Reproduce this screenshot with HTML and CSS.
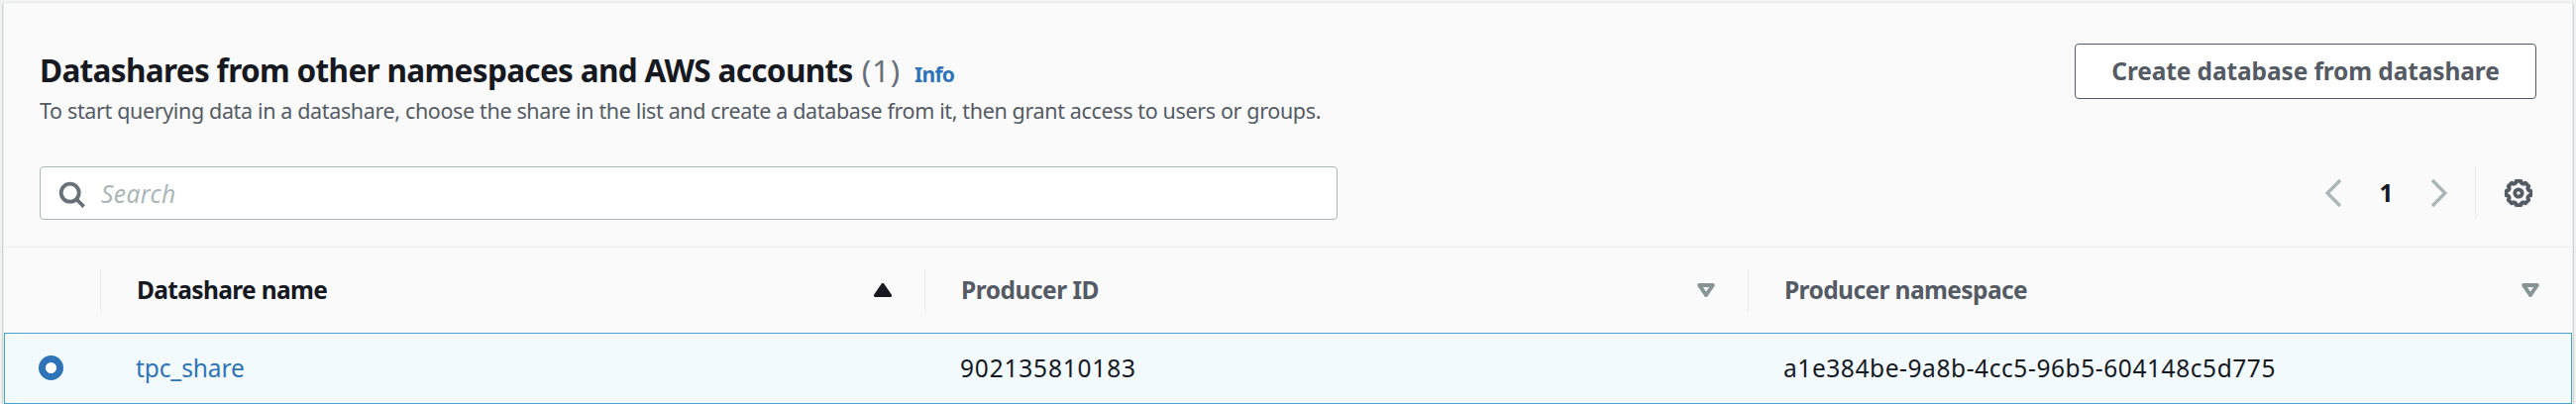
FILE: index.html
```
<!DOCTYPE html>
<html lang="en">
<head>
<meta charset="utf-8">
<title>Datashares</title>
<link rel="stylesheet" href="styles.css">
</head>
<body>
<main class="panel">
  <header class="header">
    <div>
      <h2 class="title"><span class="title-text">Datashares from other namespaces and AWS accounts</span><span class="count">(1)</span><a class="info">Info</a></h2>
      <p class="description">To start querying data in a datashare, choose the share in the list and create a database from it, then grant access to users or groups.</p>
    </div>
    <button class="button">Create database from datashare</button>
  </header>
  <div class="tools">
    <div class="search">
      <svg class="search-icon" width="28" height="28" viewBox="0 0 28 28" fill="none" stroke="#687078" stroke-width="3.8"><circle cx="11.7" cy="11.7" r="9"/><path d="M18 18l7.6 7.6"/></svg>
      <span class="placeholder">Search</span>
    </div>
    <div class="pager">
      <svg width="18" height="30" viewBox="0 0 18 30" fill="none" stroke="#aab7b8" stroke-width="3.4"><path d="M16 2L3.2 15 16 28"/></svg>
      <span class="page">1</span>
      <svg width="18" height="30" viewBox="0 0 18 30" fill="none" stroke="#aab7b8" stroke-width="3.4"><path d="M2 2l12.8 13L2 28"/></svg>
      <span class="divider"></span>
      <svg width="30" height="30" viewBox="-15 -15 30 30" fill="none" stroke="#545b64" stroke-width="3.8" stroke-linejoin="round"><path d="M12.2-2.4V2.4L10 3 9.2 4.9 10.3 6.9 6.9 10.3 4.9 9.2 3 10 2.4 12.2H-2.4L-3 10-4.9 9.2-6.9 10.3-10.3 6.9-9.2 4.9-10 3-12.2 2.4V-2.4L-10-3-9.2-4.9-10.3-6.9-6.9-10.3-4.9-9.2-3-10-2.4-12.2H2.4L3-10 4.9-9.2 6.9-10.3 10.3-6.9 9.2-4.9 10-3Z"/><circle r="3.7"/></svg>
    </div>
  </div>
  <div class="grid head">
    <div class="cell"></div>
    <div class="cell sorted"><span class="name-label">Datashare name</span><svg width="20" height="16" viewBox="0 0 20 16" fill="#16191f" stroke="#16191f" stroke-width="3" stroke-linejoin="round"><path d="M10 2.3L2.4 13.4H17.6Z"/></svg></div>
    <div class="cell"><span class="id-label">Producer ID</span><svg width="20" height="16" viewBox="0 0 20 16" fill="none" stroke="#879596" stroke-width="4" stroke-linejoin="round"><path d="M3.2 3H16.8L10 13Z"/></svg></div>
    <div class="cell"><span class="ns-label">Producer namespace</span><svg width="20" height="16" viewBox="0 0 20 16" fill="none" stroke="#879596" stroke-width="4" stroke-linejoin="round"><path d="M3.2 3H16.8L10 13Z"/></svg></div>
  </div>
  <div class="grid row">
    <div class="select"><span class="radio"></span></div>
    <a class="value link">tpc_share</a>
    <div class="value account">902135810183</div>
    <div class="value namespace">a1e384be-9a8b-4cc5-96b5-604148c5d775</div>
  </div>
</main>
</body>
</html>
```
FILE: styles.css
```
* { box-sizing: border-box; }
body {
  margin: 0;
  height: 408px;
  padding: 3px 4px 0;
  overflow: hidden;
  background: #f1f3f3;
  font-family: "Noto Sans", "Open Sans", sans-serif;
  font-size: 24.5px;
  color: #16191f;
}
.panel {
  height: 420px;
  background: #fafafa;
  box-shadow: 0 0 0 1px #e6eaea, 1px 1px 2px 0 rgba(0, 28, 36, .4), -1px 1px 2px 0 rgba(0, 28, 36, .4);
}
.header {
  display: flex;
  justify-content: space-between;
  align-items: flex-start;
  height: 165px;
  padding: 41px 36px 0;
}
.title {
  display: flex;
  align-items: baseline;
  height: 42px;
  margin: 6px 0 5px;
  font-size: 31.5px;
  line-height: 42px;
  white-space: nowrap;
}
.title-text { letter-spacing: -.66px; }
.count { margin-left: 9px; font-weight: 400; letter-spacing: .8px; color: #687078; }
.info { margin-left: 14px; font-size: 21px; letter-spacing: -.7px; color: #2e73b8; }
.description {
  margin: 0;
  font-size: 21.5px;
  line-height: 30px;
  letter-spacing: -.36px;
  color: #545b64;
  white-space: nowrap;
}
.button {
  width: 466px;
  height: 56px;
  padding: 0 0 2px;
  border: 1px solid #545b64;
  border-radius: 4px;
  background: #fff;
  font: 700 24.5px "Noto Sans", sans-serif;
  letter-spacing: -.12px;
  color: #545b64;
}
.tools {
  display: flex;
  justify-content: space-between;
  height: 81px;
  padding: 0 36px;
}
.search {
  display: flex;
  align-items: center;
  width: 1310px;
  height: 54px;
  padding-left: 18px;
  border: 1px solid #aab7b8;
  border-radius: 4px;
  background: #fff;
}
.search-icon { margin-top: 3px; }
.placeholder { margin-left: 15px; font-style: italic; letter-spacing: .42px; color: #aab7b8; }
.pager { display: flex; align-items: center; height: 54px; }
.pager svg { flex: none; }
.page { width: 89px; padding-bottom: 2px; text-align: center; font-weight: 700; }
.divider { width: 1px; height: 54px; margin: 0 28px 0 27px; background: #eaeded; }
.pager svg:last-child { margin-right: 3px; }
.grid { display: grid; grid-template-columns: 97px 832px 831px 1fr; align-items: center; }
.head {
  height: 87px;
  border-top: 1px solid #eaeded;
  font-weight: 700;
  color: #545b64;
}
.cell {
  display: flex;
  align-items: center;
  justify-content: space-between;
  height: 43px;
  padding: 0 32px 0 36px;
}
.cell span { padding-bottom: 2px; }
.cell svg { margin-bottom: 1px; }
.cell + .cell { border-left: 1px solid #eaeded; }
.sorted { color: #16191f; }
.name-label { letter-spacing: -.65px; }
.id-label { letter-spacing: -.5px; }
.ns-label { letter-spacing: -.6px; }
.row { height: 72px; border: 1px solid #4aa3cd; background: #f2fafd; }
.select { padding-left: 34px; }
.radio {
  display: block;
  width: 25px;
  height: 25px;
  margin-top: -2px;
  border: 7.5px solid #2e73b8;
  border-radius: 50%;
  background: #fff;
}
.value { padding: 0 0 2px 35px; white-space: nowrap; }
.link { letter-spacing: -.1px; color: #2e73b8; }
.account { letter-spacing: .8px; }
.namespace { letter-spacing: .57px; }
```
